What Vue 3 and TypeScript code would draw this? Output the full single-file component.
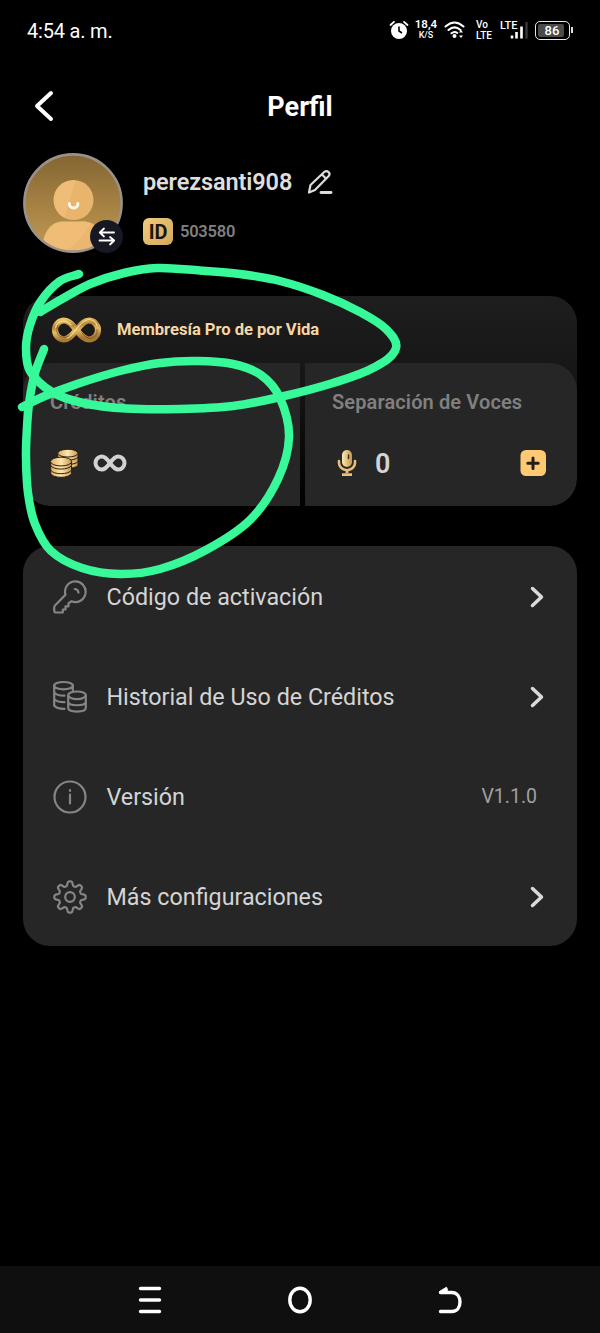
<script setup lang="ts">
type Point = [number, number]

interface MenuItem {
  icon: 'key' | 'coins' | 'info' | 'gear'
  label: string
  value?: string
}

const menu: MenuItem[] = [
  { icon: 'key', label: 'Código de activación' },
  { icon: 'coins', label: 'Historial de Uso de Créditos' },
  { icon: 'info', label: 'Versión', value: 'V1.1.0' },
  { icon: 'gear', label: 'Más configuraciones' },
]

// Smooth curve through every point; tangents follow the neighbours' direction
// and handles scale with the segment, so uneven spacing stays free of bumps.
function smooth(p: Point[]): string {
  const tangents = p.map((_, i): Point => {
    const a = p[Math.max(i - 1, 0)]
    const b = p[Math.min(i + 1, p.length - 1)]
    const len = Math.hypot(b[0] - a[0], b[1] - a[1])
    return [(b[0] - a[0]) / len, (b[1] - a[1]) / len]
  })
  let d = `M${p[0][0]} ${p[0][1]}`
  for (let i = 0; i < p.length - 1; i++) {
    const [b, c] = [p[i], p[i + 1]]
    const [t, u] = [tangents[i], tangents[i + 1]]
    const h = Math.hypot(c[0] - b[0], c[1] - b[1]) / 3
    d += `C${b[0] + t[0] * h} ${b[1] + t[1] * h} ${c[0] - u[0] * h} ${c[1] - u[1] * h} ${c[0]} ${c[1]}`
  }
  return d
}

const strokes: string[] = [
  smooth([
    [79, 274], [60, 281], [41, 301], [30, 325], [26, 348], [30, 371], [52, 392], [83, 403], [126, 408.5],
    [180, 409], [233, 406], [280, 397], [333, 383], [375, 367], [396, 348], [386, 329], [360, 312],
    [323, 295], [280, 281], [240, 274], [200, 270.5], [157, 268], [124, 273], [90, 284], [62, 299], [40, 312],
  ]),
  smooth([
    [44, 349], [35, 373], [29.5, 400], [27, 427], [26, 457], [28, 493], [35, 524], [51, 551], [82, 568], [120, 574],
    [160, 569], [206, 550], [250, 520], [278, 479], [289, 437], [280, 398], [261, 375],
    [233, 364], [197, 361], [160, 363], [120, 371], [77, 384], [45, 396], [22, 407],
  ]),
]

// Outline of an eight-toothed cog centred in a 34px box.
const gear = (() => {
  const steps = 96
  let d = ''
  for (let i = 0; i < steps; i++) {
    const t = (i / steps) * Math.PI * 2
    const wave = Math.tanh(2 * Math.cos(8 * t)) / Math.tanh(2)
    const r = 13.5 + 2.2 * wave
    d += `${i ? 'L' : 'M'}${(17 + r * Math.sin(t)).toFixed(2)} ${(17 - r * Math.cos(t)).toFixed(2)}`
  }
  return d + 'Z'
})()
</script>

<template>
  <main class="screen">
    <header class="status">
      <span class="clock">4:54 a. m.</span>
      <div class="indicators">
        <svg class="alarm" width="20" height="20" viewBox="0 0 20 20">
          <circle cx="10" cy="11" r="8" fill="#fff" />
          <path d="M1.5 5 5 1.8M18.5 5 15 1.8" stroke="#fff" stroke-width="1.8" stroke-linecap="round" />
          <path d="M10 6.5V11l3 2" fill="none" stroke="#000" stroke-width="1.6" />
        </svg>
        <div class="pair speed"><b>18,4</b><small>K/S</small></div>
        <svg class="wifi" width="22" height="20" viewBox="0 0 22 20">
          <g fill="none" stroke="#fff" stroke-width="2" stroke-linecap="round">
            <path d="M1.5 6.5Q10.500-1.500 19.500 6.500M4.500 10Q10.500 4.800 16.500 10M7.500 13.300Q10.500 10.800 13.300 13" />
          </g>
          <circle cx="10.500" cy="16" r="2" fill="#fff" />
          <path d="m17 10 2 2.500h-4zM17 18l2-2.500h-4z" fill="#fff" />
        </svg>
        <div class="pair volte"><span>Vo</span><span>LTE</span></div>
        <div class="signal">
          <span>LTE</span>
          <svg width="18" height="18" viewBox="0 0 18 18">
            <path d="M2 14.500v3M6.500 11v6.500M11.500 5.500v12" stroke="#fff" stroke-width="2.600" />
            <path d="M16.500 1v16.500" stroke="#3c3c3c" stroke-width="2.200" />
          </svg>
        </div>
        <div class="battery"><span>86</span></div>
        <i class="nub"></i>
      </div>
    </header>

    <nav class="title-bar">
      <svg width="20" height="32" viewBox="0 0 20 32">
        <path d="M17 3 3 16l14 13" fill="none" stroke="#fff" stroke-width="4" stroke-linecap="round" stroke-linejoin="round" />
      </svg>
      <h1>Perfil</h1>
    </nav>

    <section class="profile">
      <div class="avatar">
        <svg width="100" height="100" viewBox="0 0 100 100">
          <defs>
            <linearGradient id="avatarBg" x1="0" y1="0" x2="0" y2="1">
              <stop offset="0" stop-color="#846633" /><stop offset="1" stop-color="#c39a52" />
            </linearGradient>
            <linearGradient id="skin" x1="0" y1="0" x2="1" y2="0.300">
              <stop offset="0.500" stop-color="#efbd77" /><stop offset="0.520" stop-color="#e9b56d" />
            </linearGradient>
            <clipPath id="avatarClip"><circle cx="50" cy="50" r="48" /></clipPath>
          </defs>
          <circle cx="50" cy="50" r="48.500" fill="url(#avatarBg)" />
          <g clip-path="url(#avatarClip)">
            <path d="M18 100C20 78 28 68.500 40 68.500h20C73 68.500 80 78 82 100z" fill="#efbd75" />
            <path d="M55 68.500h5C73 68.500 80 78 82 100H38Q57 91 68 70z" fill="#ebb770" />
          </g>
          <circle cx="50.500" cy="47" r="20" fill="url(#skin)" />
          <path d="M46.300 50.500a4.300 4.500 0 0 0 8.600 0" fill="none" stroke="#fff8ec" stroke-width="3" stroke-linecap="round" />
          <circle cx="50" cy="50" r="48.600" fill="none" stroke="#9a9189" stroke-width="2.600" />
        </svg>
        <svg class="swap" width="33" height="33" viewBox="0 0 33 33">
          <circle cx="16.500" cy="16.500" r="16.500" fill="#171922" />
          <path d="M24 12.500H10m4-4-4.200 4 4.200 4M9.500 20.500H24m-4-3.500 4.200 3.500-4.200 4" fill="none" stroke="#fff" stroke-width="1.800" stroke-linecap="round" stroke-linejoin="round" />
        </svg>
      </div>
      <div class="identity">
        <div class="name-row">
          <strong>perezsanti908</strong>
          <svg width="26" height="26" viewBox="0 0 26 26">
            <path d="M2 23.500 3.500 16 17.500 2.800q2-1.500 4 .3t.2 4L8 21zM15 5.500l4.400 4.500" fill="none" stroke="#ddd" stroke-width="2.200" stroke-linejoin="round" />
            <path d="M14 23.500h10" stroke="#ddd" stroke-width="2.800" stroke-linecap="round" />
          </svg>
        </div>
        <div class="id-row"><b>ID</b><span>503580</span></div>
      </div>
    </section>

    <section class="plan">
      <div class="plan-head">
        <svg width="50" height="28" viewBox="0 0 50 28">
          <defs>
            <linearGradient id="gold" x1="0" y1="0" x2="0.250" y2="1">
              <stop offset="0" stop-color="#ecc56b" /><stop offset="0.350" stop-color="#b88734" />
              <stop offset="0.600" stop-color="#e5bb68" /><stop offset="1" stop-color="#a67a32" />
            </linearGradient>
          </defs>
          <g fill="none" stroke-linecap="round">
            <path d="M25.500 14C20 7 17 4.500 13 4.500a9 9.500 0 0 0 0 19C17 23.500 20.500 20 25.500 14S34 4.500 38 4.500a9 9.500 0 0 1 0 19C34 23.500 31 21 25.500 14z" stroke="url(#gold)" stroke-width="6.200" />
            <path d="M20 9Q16 5 12.500 5.200q-6 0-8 6.500M16 22c4-1 8.500-8 11.500-11.500S35 3.500 38 3.500s7 2 8 6" stroke="#ffe7a4" stroke-width="1.200" opacity=".75" />
            <path d="M7 9q-3.500 7 2 11.500 5 2.500 9-.5M31 17q5 6 9 5.500 7-2 6-9" stroke="#75501c" stroke-width="1" opacity=".7" />
          </g>
        </svg>
        <span>Membresía Pro de por Vida</span>
      </div>
      <div class="tiles">
        <article class="tile">
          <h2>Créditos</h2>
          <div class="amount">
            <svg width="29" height="29" viewBox="0 0 30 30">
              <defs>
                <linearGradient id="coin"><stop offset="0" stop-color="#dbae64" /><stop offset="0.500" stop-color="#ffe6ac" /><stop offset="1" stop-color="#c4964f" /></linearGradient>
              </defs>
              <g fill="url(#coin)" stroke="#251c11" stroke-width="1">
                <path d="M8 13v4c2 4 18 4 21 0v-4z" /><path d="M8 9v4c2 4 18 4 21 0V9z" />
                <path d="M8 4v4.500c2 4 18 4 21 0V4z" /><ellipse cx="18.500" cy="4.300" rx="10.500" ry="4" />
                <path d="M.8 22v3.500c2 5 19 5 21.500 0V22z" /><path d="M.8 17.500v4.300c2 5 19 5 21.500 0v-4.300z" />
                <path d="M.8 13v4c2 5 19 5 21.500 0v-4z" /><ellipse cx="11.500" cy="13" rx="11" ry="4.500" />
              </g>
            </svg>
            <svg class="endless" width="34" height="20" viewBox="0 0 34 20">
              <path d="M17 10C13.500 5 11.500 3.500 8.800 3.500a6.300 6.500 0 0 0 0 13C11.500 16.500 13.500 15 17 10S22.500 3.500 25.200 3.500a6.300 6.500 0 0 1 0 13C22.500 16.500 20.500 15 17 10z" fill="none" stroke="#d2d2d2" stroke-width="4" />
            </svg>
          </div>
        </article>
        <article class="tile voices">
          <h2>Separación de Voces</h2>
          <div class="amount">
            <svg width="20" height="28" viewBox="0 0 20 28">
              <defs>
                <linearGradient id="mic"><stop offset="0" stop-color="#ffe9b2" /><stop offset="1" stop-color="#c2974f" /></linearGradient>
              </defs>
              <rect x="5" y="1" width="10" height="17" rx="5" fill="url(#mic)" />
              <path d="M11.500 6v3.500" stroke="#403019" stroke-width="1.500" stroke-linecap="round" />
              <path d="M2 12v2a8 7.200 0 0 0 16 0v-2" fill="none" stroke="#e8bf78" stroke-width="2.600" stroke-linecap="round" />
              <path d="M10 21v3M5 25.600h10" stroke="#e9c17b" stroke-width="2.800" />
            </svg>
            <strong>0</strong>
            <svg class="add" width="26" height="26" viewBox="0 0 26 26">
              <rect x=".5" width="25.500" height="26" rx="5.500" fill="#fdc973" />
              <path d="M13 8v10.400M7.800 13.200h10.400" stroke="#241e16" stroke-width="3" stroke-linecap="round" />
            </svg>
          </div>
        </article>
      </div>
    </section>

    <ul class="menu">
      <li v-for="item in menu" :key="item.icon">
        <svg class="icon" width="34" height="34" viewBox="0 0 34 34">
          <template v-if="item.icon === 'key'">
            <path d="M12.500 14.800A10.300 10.300 0 1 1 18.500 21.300L15.500 23.200V26.300H12.500V29.500H9.800V32.500H3.200Q1.200 32.500 1.200 30.500V27.500Q1.200 26.300 2.200 25.300z" />
            <path d="M21.700 9q3.300 0 3.800 3.700" />
          </template>
          <template v-else-if="item.icon === 'coins'">
            <ellipse cx="10.500" cy="5.700" rx="9.300" ry="3.700" />
            <path d="M19.800 5.700v4.500M1.200 5.700v20q2 3 10.300 3.200M1.200 12.500q2 3 10.300 3.200M1.200 19q2 3 10.300 3.200" />
            <ellipse cx="24" cy="15.300" rx="8.800" ry="3.800" />
            <path d="M15.200 15.300v12.500c0 5 17.600 5 17.600 0V15.300M15.200 21.500c0 5 17.600 5 17.600 0" />
          </template>
          <template v-else-if="item.icon === 'info'">
            <circle cx="17" cy="17" r="15.500" />
            <path d="M17 14.500v9M17 10v1" />
          </template>
          <template v-else>
            <path :d="gear" />
            <circle cx="17" cy="17" r="4.800" />
          </template>
        </svg>
        <span class="label">{{ item.label }}</span>
        <span v-if="item.value" class="value">{{ item.value }}</span>
        <svg v-else class="chevron" width="14" height="22" viewBox="0 0 14 22">
          <path d="m2.500 2.500 9 8.500-9 8.500" fill="none" stroke="#dadada" stroke-width="3.500" stroke-linecap="round" stroke-linejoin="round" />
        </svg>
      </li>
    </ul>

    <footer class="system-nav">
      <svg width="24" height="28" viewBox="0 0 24 28"><path d="M2.500 2.500h19M2.500 14h19M2.500 25.500h19" stroke="#fff" stroke-width="3.400" stroke-linecap="round" /></svg>
      <svg width="24" height="28" viewBox="0 0 24 28"><ellipse cx="12" cy="14" rx="10.200" ry="11.700" fill="none" stroke="#fff" stroke-width="3.400" /></svg>
      <svg width="24" height="28" viewBox="0 0 24 28">
        <path d="M2.500 6.500h11c5.500 0 8.500 4.300 8.500 9.600s-3 9.400-8 9.400H2.500" fill="none" stroke="#fff" stroke-width="3.400" stroke-linecap="round" />
        <path d="m1.500 5.500 7-4.300 1 2.500-1 3H2z" fill="#fff" stroke="#fff" stroke-linejoin="round" />
      </svg>
    </footer>

    <svg class="scribble" width="600" height="1333" viewBox="0 0 600 1333">
      <path v-for="(d, i) in strokes" :key="i" :d="d" />
    </svg>
  </main>
</template>

<style>
body {
  background: #000;
}
</style>

<style scoped>
.screen {
  position: relative;
  display: flex;
  flex-direction: column;
  box-sizing: border-box;
  width: 600px;
  height: 1333px;
  overflow: hidden;
  background: #000;
  color: #d4d4d4;
  font-family: Roboto, "Liberation Sans", sans-serif;
}
svg {
  display: block;
  flex: none;
}
.status {
  display: flex;
  justify-content: space-between;
  align-items: center;
  height: 60px;
  padding: 0 27px;
  color: #fff;
}
.clock {
  padding-top: 1px;
  font-size: 20px;
  letter-spacing: -0.2px;
}
.indicators {
  display: flex;
  align-items: center;
}
.pair {
  display: flex;
  flex-direction: column;
  align-items: center;
  font-weight: 500;
}
.speed {
  width: 24px;
  margin-left: 5px;
  margin-top: -2px;
}
.speed b {
  font-size: 11.500px;
  font-weight: 600;
  line-height: 12px;
}
.speed small {
  font-size: 9px;
  line-height: 10px;
}
.wifi {
  margin-left: 6px;
}
.volte {
  align-items: flex-start;
  width: 18px;
  margin-left: 10px;
  font-size: 10px;
  line-height: 11px;
}
.signal {
  display: flex;
  align-items: flex-start;
  width: 31px;
  margin-left: 6px;
}
.signal span {
  font-size: 11px;
  line-height: 10px;
  font-weight: 500;
}
.signal svg {
  margin-left: -8px;
}
.battery {
  box-sizing: border-box;
  width: 35px;
  height: 19px;
  margin-left: 4px;
  padding: 2px;
  border: 1.500px solid #e8e8e8;
  border-radius: 5px;
}
.battery span {
  display: block;
  width: 26px;
  height: 13px;
  border-radius: 2px;
  background: #4b4b4b;
  font-size: 13px;
  font-weight: 500;
  line-height: 14px;
  text-align: center;
  text-indent: 2px;
}
.nub {
  width: 2px;
  height: 6px;
  margin-left: 1px;
  background: #ddd;
}
.title-bar {
  display: grid;
  grid-template-columns: 20px 1fr 20px;
  align-items: center;
  height: 92px;
  padding: 0 34px;
}
h1 {
  margin: 0;
  padding-top: 1px;
  color: #fff;
  font-size: 27px;
  font-weight: 700;
  line-height: 32px;
  text-align: center;
}
.profile {
  display: flex;
  height: 144px;
  padding: 1px 23px 0;
  box-sizing: border-box;
}
.avatar {
  position: relative;
  width: 100px;
  height: 100px;
}
.swap {
  position: absolute;
  right: 0;
  bottom: 0;
}
.identity {
  display: flex;
  flex-direction: column;
  padding: 14px 0 0 20px;
}
.name-row {
  display: flex;
  align-items: center;
  gap: 15px;
  height: 30px;
}
.name-row strong {
  color: #dedede;
  font-size: 23.500px;
  font-weight: 600;
  letter-spacing: -0.120px;
}
.id-row {
  display: flex;
  align-items: center;
  gap: 7px;
  margin-top: 21px;
  font-size: 16.500px;
  font-weight: 600;
  letter-spacing: -0.250px;
  color: #808080;
}
.id-row b {
  width: 30px;
  height: 27px;
  border-radius: 6px;
  background: linear-gradient(135deg, #efcc7e, #d5a85b);
  color: #1d160c;
  font-size: 20px;
  font-weight: 700;
  line-height: 28px;
  text-align: center;
}
.plan {
  height: 210px;
  margin: 0 23px;
  overflow: hidden;
  border-radius: 27px;
  background: linear-gradient(#1e1e1e 0, #171717 70px, #131313 100px, #000 210px);
}
.plan-head {
  display: flex;
  align-items: center;
  height: 67px;
  padding-left: 28px;
  gap: 16px;
  color: #f5d7a4;
  font-size: 16.600px;
  font-weight: 700;
  letter-spacing: -0.030px;
}
.tiles {
  display: grid;
  grid-template-columns: 277px 272px;
  gap: 5px;
  height: 143px;
}
.tile {
  padding: 27px 27px 0;
  border-radius: 27px 0 0 27px;
  background: #262626;
}
.voices {
  border-radius: 0 27px 27px 0;
}
h2 {
  margin: 0;
  color: #808080;
  font-size: 20px;
  font-weight: 600;
  line-height: 24px;
  letter-spacing: 0.120px;
}
.amount {
  display: flex;
  align-items: center;
  height: 32px;
  margin-top: 33px;
}
.endless {
  margin-left: 14px;
}
.voices .amount {
  padding-left: 5px;
}
.amount strong {
  margin-left: 18px;
  padding-top: 1px;
  font-size: 27px;
  font-weight: 600;
  line-height: 32px;
}
.add {
  margin-left: auto;
  margin-right: 4px;
}
.menu {
  margin: 40px 23px 0;
  padding: 0;
  height: 400px;
  border-radius: 27px;
  background: #262626;
  list-style: none;
}
.menu li {
  display: flex;
  align-items: center;
  height: 100px;
  padding: 1px 33px 0 29.500px;
  box-sizing: border-box;
}
.icon {
  fill: none;
  stroke: #858585;
  stroke-width: 2.200;
  stroke-linecap: round;
  stroke-linejoin: round;
}
.label {
  flex: 1;
  margin-left: 20px;
  padding-top: 1px;
  font-size: 23.300px;
}
.value {
  margin-right: 7px;
  color: #a0a0a0;
  font-size: 19.500px;
}
.system-nav {
  display: flex;
  justify-content: center;
  align-items: center;
  gap: 126px;
  height: 67px;
  margin-top: auto;
  background: #0f0f0f;
}
.scribble {
  position: absolute;
  inset: 0;
  fill: none;
  stroke: #37f99a;
  stroke-width: 8.500;
  stroke-linecap: round;
  stroke-linejoin: round;
  pointer-events: none;
}
</style>
